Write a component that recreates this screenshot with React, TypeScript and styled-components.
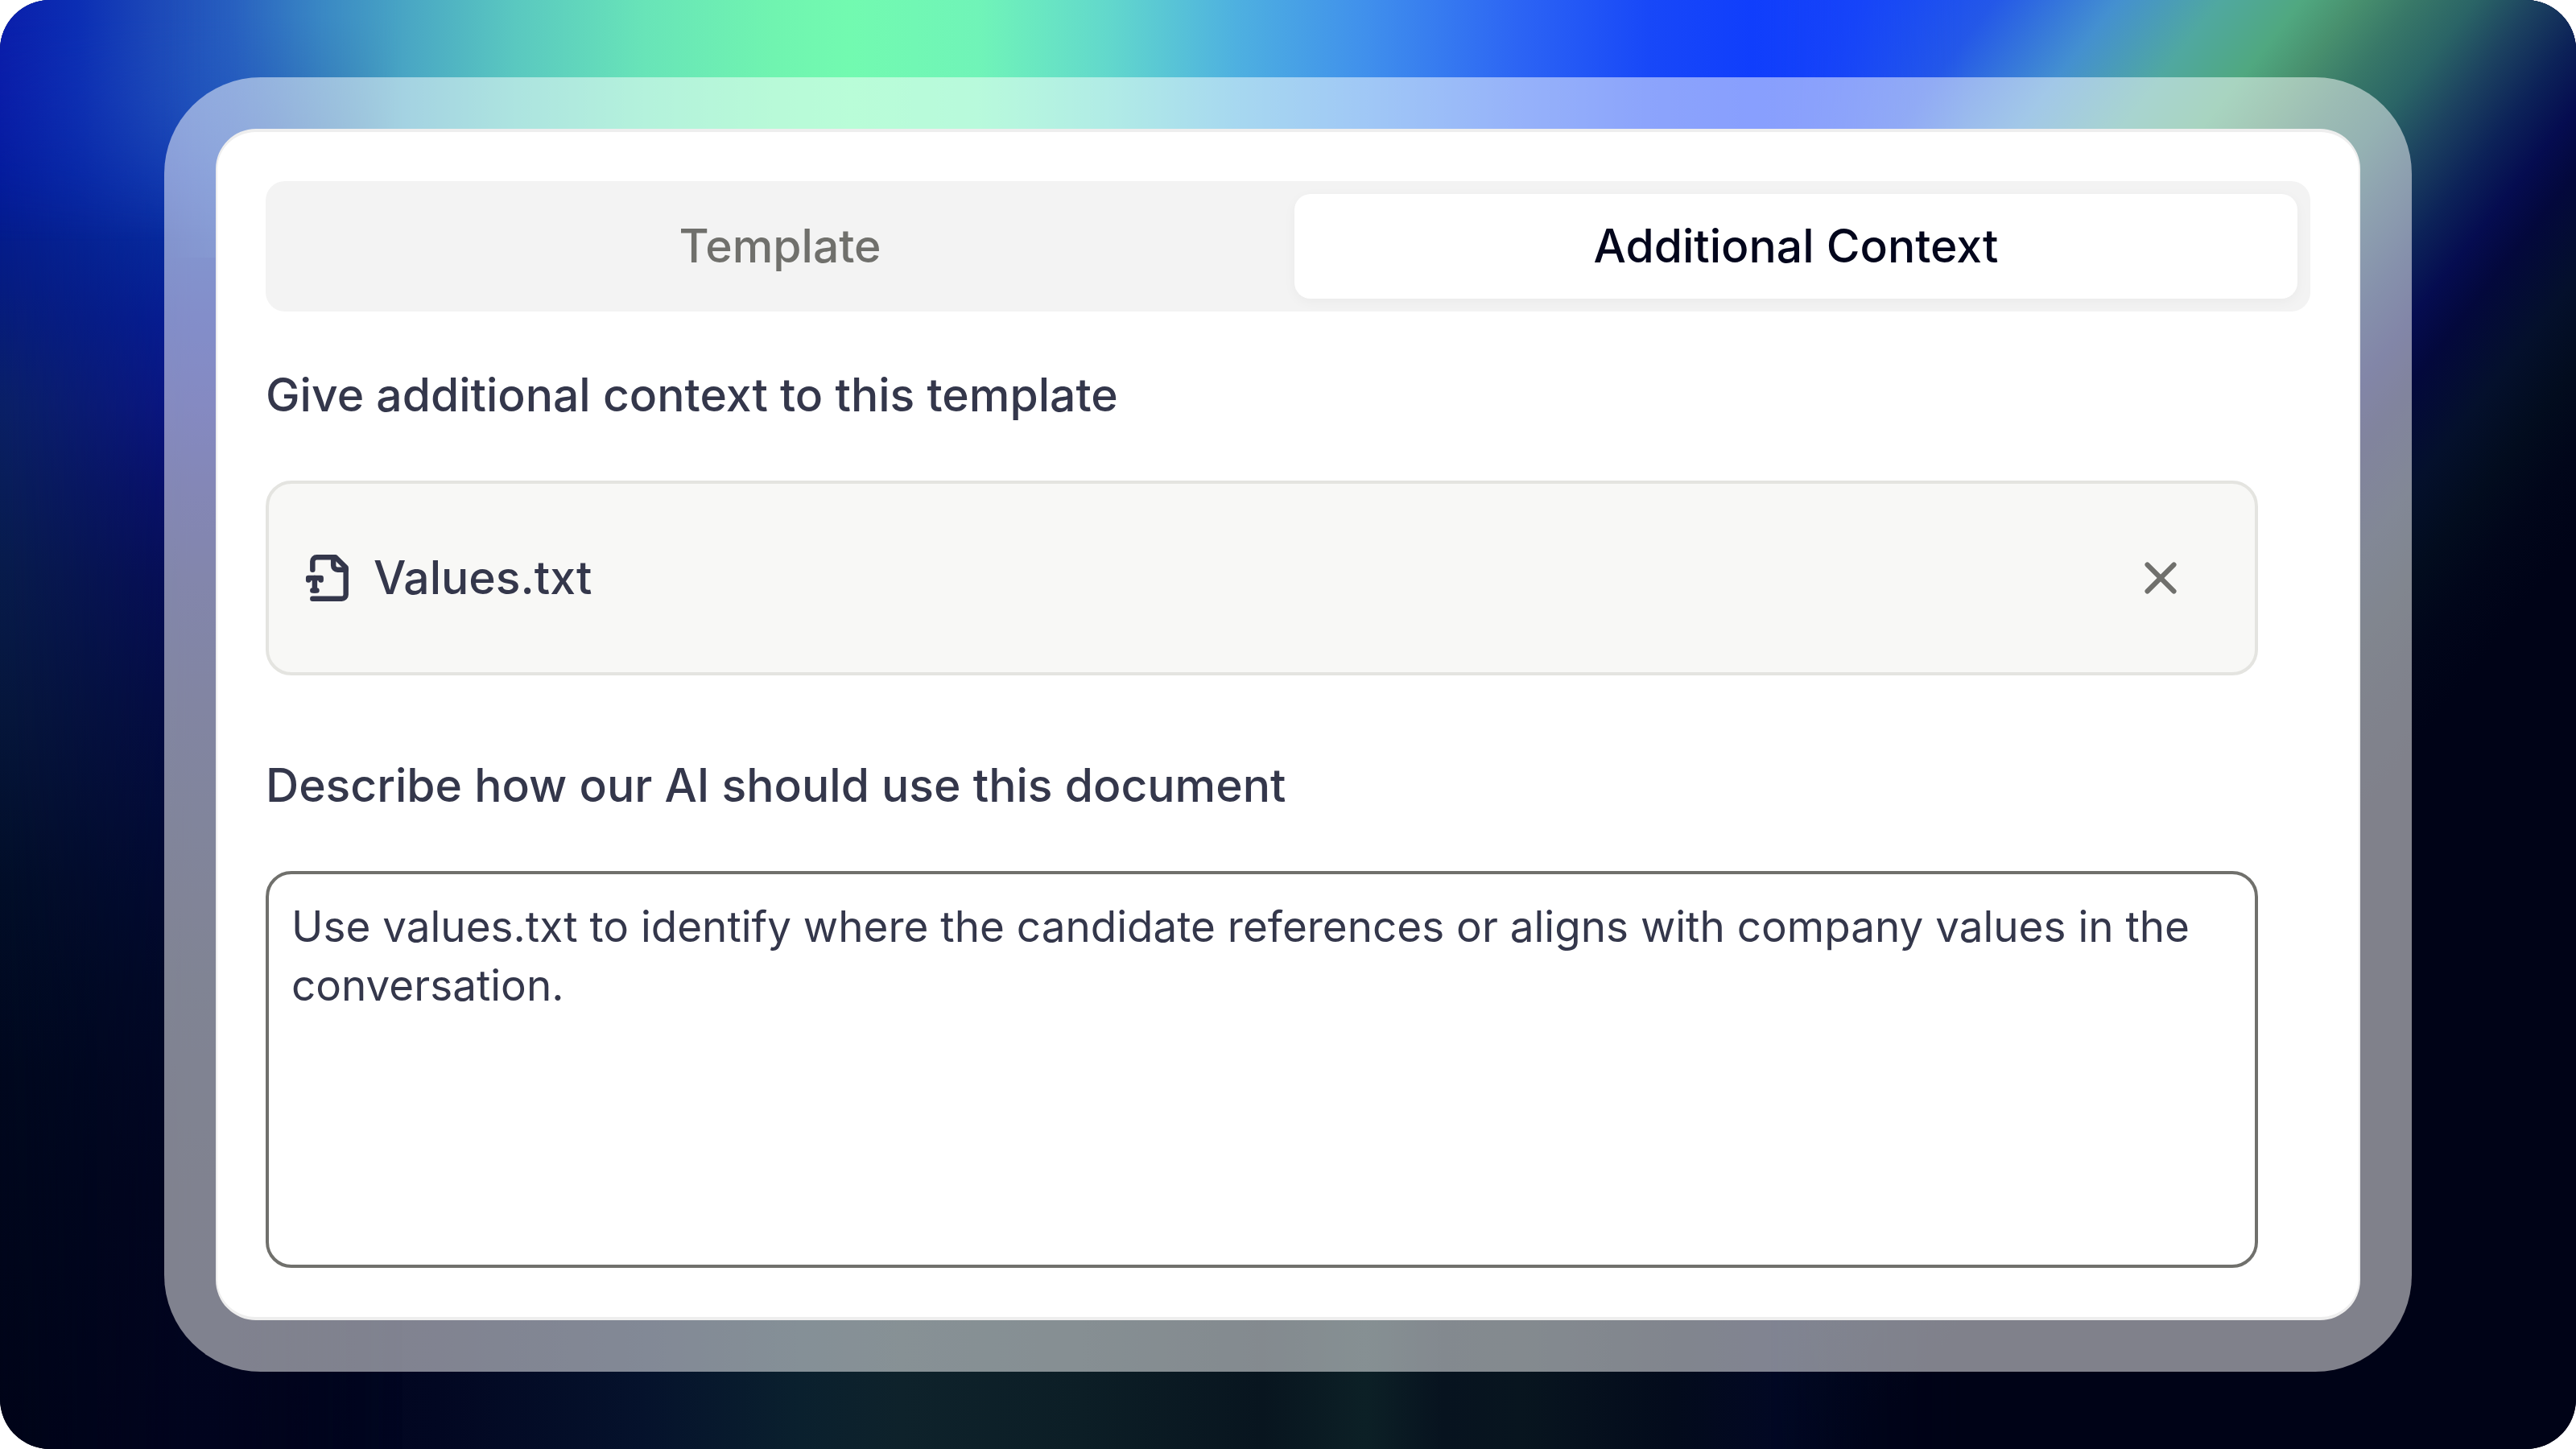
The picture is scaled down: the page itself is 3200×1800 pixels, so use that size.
import React, { useState } from "react";
import styled, { createGlobalStyle } from "styled-components";

const GlobalStyle = createGlobalStyle`
  *, *::before, *::after { box-sizing: border-box; }
  html { background: #ffffff; }
  body {
    margin: 0;
    font-family: Inter, "Liberation Sans", sans-serif;
    color: #34374b;
  }
`;

const Stage = styled.main`
  position: relative;
  isolation: isolate;
  overflow: hidden;
  display: flex;
  min-height: 100vh;
  padding: 96px 204px;
  border-radius: 62px;
  background: linear-gradient(
    to right,
    #00051a 0%, #01041f 9%, #020722 17%, #05122c 25%, #0a202e 31%, #0e222b 35%,
    #0c1e26 42%, #08151f 49%, #0c2026 53%, #07131f 56%, #08151f 59%, #030b1c 65%,
    #020824 69%, #000317 76%, #000317 100%
  );
`;

const Glow = styled.div`
  position: absolute;
  z-index: -1;
  top: 0;
  pointer-events: none;
`;

const EdgeGlow = styled(Glow)`
  left: 0;
  bottom: 0;
  width: 500px;
  background: linear-gradient(
    to bottom,
    #0a1ea8 0%, #0a1ca6 6%, #031c98 12%, #061c80 20%, #0a2066 28%, #081c4c 39%,
    #06163a 50%, #020e28 61%, #01081e 74%, #000418 100%
  );
  mask-image: linear-gradient(to right, #000 268px, transparent 500px);
`;

const InnerGlow = styled(Glow)`
  left: 0;
  bottom: 0;
  width: 500px;
  background: linear-gradient(
    to bottom,
    #2460c0 0%, #1c4cba 7%, #1038b0 12%, #072a9e 17%, #061c94 22%, #0a1484 28%,
    #080e6c 34%, #060c58 40%, #040b46 48%, #030a38 57%, #010828 68%, #010520 82%, #01041e 100%
  );
  mask-image: linear-gradient(to right, transparent, #000 240px, #000 268px, transparent 500px);
`;

const TopGlow = styled(Glow)`
  left: 0;
  right: 0;
  height: 320px;
  background: linear-gradient(
    to right,
    #0a1eaa 0%, #0b2eb4 3%, #1c48b8 6%, #2860c0 9%, #3a88c4 12.5%, #4aa8c4 16%,
    #5ac8c0 20%, #68e4b8 25%, #70f4b0 30%, #72fab0 33%, #70f4b8 38%, #62d8cc 43%,
    #4eb0e0 48%, #4090ec 53%, #2c64f4 59%, #1848f8 64%, #103efc 68%, #1844f8 72%,
    #2458e8 77%, #4490d0 81%, #50a898 87%, #081858 100%
  );
  mask-image: linear-gradient(to bottom, #000 20px, transparent 300px);
`;

const TopCenterGlow = styled(TopGlow)`
  mask-image: linear-gradient(to right, transparent 200px, #000 500px);
`;

const CornerGlow = styled(Glow)`
  right: 0;
  bottom: 0;
  width: 1000px;
  background: linear-gradient(
    128deg,
    #103efc 0px, #1444fa 90px, #2458e8 220px, #4490d0 340px, #50a8a0 440px,
    #50a880 520px, #48906e 575px, #387868 630px, #2a6466 690px, #1c4260 750px,
    #0c2258 815px, #050c50 870px, #03083c 920px, #04102c 1000px, #020c1e 1070px,
    #01061a 1130px, #000317 1200px, #000317 100%
  );
  mask-image: linear-gradient(to right, transparent, #000 240px);
`;

const Frame = styled.div`
  flex: 1;
  display: flex;
  padding: 64px;
  border-radius: 120px;
  background: rgba(255, 255, 255, 0.5);
`;

const Card = styled.section`
  flex: 1;
  display: flex;
  flex-direction: column;
  padding: 61px 60px;
  border: solid #eeeeee;
  border-width: 4px 2px;
  border-radius: 50px;
  background: #ffffff;
`;

const TabList = styled.div`
  display: flex;
  gap: 16px;
  height: 162px;
  padding: 16px;
  border-radius: 24px;
  background: #f3f3f3;
`;

const Tab = styled.button<{ $active: boolean }>`
  flex: 1;
  padding: 0;
  border: 0;
  border-radius: 20px;
  font: 500 57px/84px Inter, "Liberation Sans", sans-serif;
  cursor: pointer;
  color: ${(p) => (p.$active ? "#03061c" : "#70706c")};
  background: ${(p) => (p.$active ? "#ffffff" : "transparent")};
  box-shadow: ${(p) => (p.$active ? "0 4px 16px rgba(0, 0, 0, 0.04)" : "none")};
`;

const Panel = styled.div`
  flex: 1;
  display: flex;
  flex-direction: column;
  padding-top: 62px;
  padding-right: 65px;
`;

const Heading = styled.h2`
  margin: 0 0 64px;
  font-size: 57px;
  font-weight: 500;
  line-height: 84px;
`;

const FieldLabel = styled.label`
  margin: 95px 0 64px;
  font-size: 57px;
  font-weight: 500;
  line-height: 84px;
`;

const FileRow = styled.div`
  display: flex;
  align-items: center;
  gap: 24px;
  height: 242px;
  padding: 0 84px 0 44px;
  border: 4px solid #e4e4e0;
  border-radius: 32px;
  background: #f8f8f6;
`;

const FileName = styled.span`
  flex: 1;
  font-size: 57px;
  font-weight: 500;
  line-height: 84px;
`;

const RemoveButton = styled.button`
  display: flex;
  padding: 0;
  border: 0;
  background: none;
  color: #70706c;
  cursor: pointer;
`;

const Prompt = styled.textarea`
  flex: 1;
  display: block;
  width: 100%;
  margin: 0;
  padding: 29px 28px;
  border: 4px solid #70706c;
  border-radius: 32px;
  outline: none;
  resize: none;
  background: #ffffff;
  color: #34374b;
  font: 400 53px/73px Inter, "Liberation Sans", sans-serif;
`;

type StrokeIconProps = { size: number; stroke: number; children: React.ReactNode };

const StrokeIcon = ({ size, stroke, children }: StrokeIconProps) => (
  <svg
    width={size}
    height={size}
    viewBox="0 0 24 24"
    fill="none"
    stroke="currentColor"
    strokeWidth={stroke}
    strokeLinecap="round"
    strokeLinejoin="round"
    aria-hidden="true"
  >
    {children}
  </svg>
);

const TextFileIcon = () => (
  <StrokeIcon size={62} stroke={2.5}>
    <path d="M4 22h14a2 2 0 0 0 2-2V7l-5-5H6a2 2 0 0 0-2 2v4" />
    <path d="M14 2v4a2 2 0 0 0 2 2h4" />
    <path d="M2 13v-1h6v1" />
    <path d="M5 12v6" />
    <path d="M4 18h2" />
  </StrokeIcon>
);

const CloseIcon = () => (
  <StrokeIcon size={66} stroke={2.2}>
    <path d="M18 6 6 18" />
    <path d="m6 6 12 12" />
  </StrokeIcon>
);

const tabs = ["Template", "Additional Context"];

export default function App() {
  const [active, setActive] = useState("Additional Context");
  const [prompt, setPrompt] = useState(
    "Use values.txt to identify where the candidate references or aligns with company values in the conversation."
  );

  return (
    <>
      <GlobalStyle />
      <Stage>
        <EdgeGlow />
        <InnerGlow />
        <TopGlow />
        <TopCenterGlow />
        <CornerGlow />
        <Frame>
          <Card>
            <TabList role="tablist">
              {tabs.map((name) => (
                <Tab
                  key={name}
                  type="button"
                  role="tab"
                  aria-selected={name === active}
                  $active={name === active}
                  onClick={() => setActive(name)}
                >
                  {name}
                </Tab>
              ))}
            </TabList>
            <Panel role="tabpanel">
              <Heading>Give additional context to this template</Heading>
              <FileRow>
                <TextFileIcon />
                <FileName>Values.txt</FileName>
                <RemoveButton type="button" aria-label="Remove Values.txt">
                  <CloseIcon />
                </RemoveButton>
              </FileRow>
              <FieldLabel htmlFor="prompt">Describe how our AI should use this document</FieldLabel>
              <Prompt
                id="prompt"
                spellCheck={false}
                value={prompt}
                onChange={(e) => setPrompt(e.target.value)}
              />
            </Panel>
          </Card>
        </Frame>
      </Stage>
    </>
  );
}
